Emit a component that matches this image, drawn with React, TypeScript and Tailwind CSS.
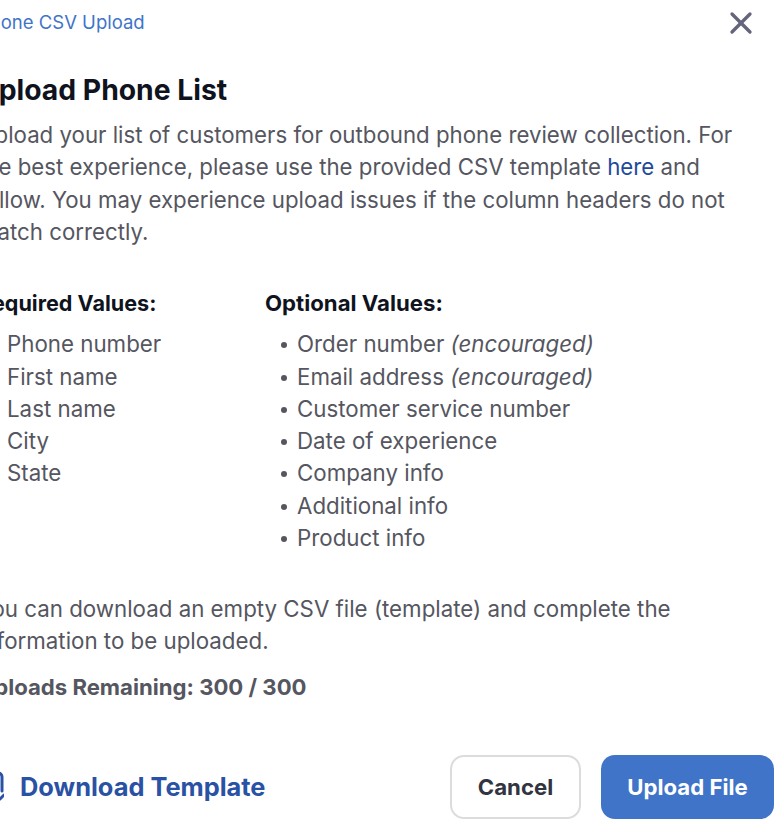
import React from 'react';
import { X } from 'lucide-react';

const requiredValues = ['Phone number', 'First name', 'Last name', 'City', 'State'];

const optionalValues = [
  { label: 'Order number', note: '(encouraged)' },
  { label: 'Email address', note: '(encouraged)' },
  { label: 'Customer service number' },
  { label: 'Date of experience' },
  { label: 'Company info' },
  { label: 'Additional info' },
  { label: 'Product info' },
];

export default function App() {
  return (
    <div className="w-[780px] h-[832px] overflow-hidden bg-white font-['Inter',sans-serif] text-[22.3px] leading-[32.25px] text-[#55565f]">
      <div className="-ml-[22px] w-[802px] pr-[6px] pt-[6px]">
        {/* Header */}
        <div className="flex items-start justify-between pr-[18px]">
          <span className="text-[18.5px] leading-[32px] text-[#3f74c9]">Phone CSV Upload</span>
          <X className="w-[36px] h-[36px] -mt-[1px] -mr-[3px] text-[#64647a]" strokeWidth={2.2} />
        </div>

        {/* Title */}
        <h1 className="mt-[29px] text-[28.3px] leading-[40px] font-bold text-[#0f1320]">Upload Phone List</h1>
        <p className="mt-[9px] w-[764px] text-[22.25px]">
          Upload your list of customers for outbound phone review collection. For the best experience, please use the provided CSV template{' '}
          <span className="text-[#1f4a9c]">here</span> and follow. You may experience upload issues if the column headers do not match correctly.
        </p>

        {/* Values */}
        <div className="mt-[39px] flex">
          <div className="w-[287px]">
            <h2 className="text-[21.6px] font-bold text-[#0f1320]">Required Values:</h2>
            <ul className="mt-[9px] pl-[29px]">
              {requiredValues.map((item) => (
                <li key={item}>{item}</li>
              ))}
            </ul>
          </div>
          <div>
            <h2 className="text-[22.2px] font-bold text-[#0f1320]">Optional Values:</h2>
            <ul className="mt-[9px] pl-[16px]">
              {optionalValues.map((item) => (
                <li key={item.label} className="flex items-center">
                  <span className="w-[6px] h-[6px] rounded-full bg-[#55565f] mr-[10px] mt-[2px]" />
                  <span>
                    {item.label} {item.note && <em>{item.note}</em>}
                  </span>
                </li>
              ))}
            </ul>
          </div>
        </div>

        {/* Notes */}
        <p className="mt-[39px] w-[704px]">
          You can download an empty CSV file (template) and complete the information to be uploaded.
        </p>
        <p className="mt-[13px] text-[22.15px] font-bold">Uploads Remaining: 300 / 300</p>

        {/* Footer */}
        <div className="mt-[52px] flex items-center justify-between">
          <div className="flex items-center gap-[16px] text-[#2a52a4]">
            <svg className="w-[26px] h-[32px]" viewBox="0 0 26 32" fill="none" stroke="currentColor" strokeWidth={3} strokeLinecap="round" strokeLinejoin="round">
              <path d="M8 2h12a4 4 0 0 1 4 4v14" />
              <path d="M26 24l-4 4" />
            </svg>
            <span className="text-[25.4px] font-bold">Download Template</span>
          </div>
          <div className="flex gap-[20px]">
            <button className="w-[131px] h-[64px] rounded-[14px] border-2 border-[#dcdcdf] bg-white text-[22.2px] font-bold text-[#32343f]">
              Cancel
            </button>
            <button className="w-[173px] h-[64px] rounded-[14px] bg-[#3f74c9] text-[22.2px] font-bold text-white">
              Upload File
            </button>
          </div>
        </div>
      </div>
    </div>
  );
}
